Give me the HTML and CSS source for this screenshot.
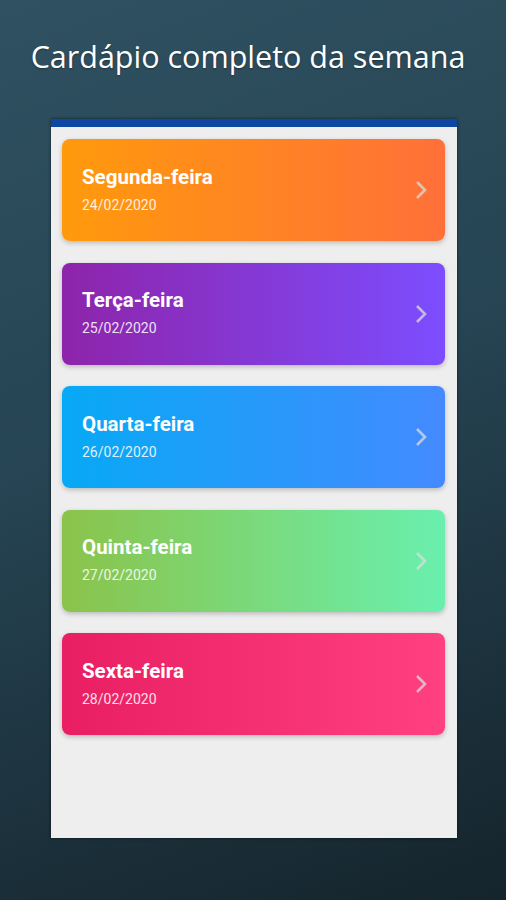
FILE: index.html
```html
<html>
<head>
    <meta name="viewport" content="width=device-width, initial-scale=1">
    <link rel="stylesheet" href="styles.css">
</head>
<body>
<h1 class="headline">Cardápio completo da semana</h1>
<div class="screen">
    <div class="appbar"></div>
    <div class="days">
        <div class="day orange">
            <div class="day-text">
                <div class="day-name">Segunda-feira</div>
                <div class="day-date">24/02/2020</div>
            </div>
            <svg class="chevron" viewBox="0 0 14 22" width="14" height="22"><path d="M3 3 L11 11 L3 19" /></svg>
        </div>
        <div class="day purple">
            <div class="day-text">
                <div class="day-name">Terça-feira</div>
                <div class="day-date">25/02/2020</div>
            </div>
            <svg class="chevron" viewBox="0 0 14 22" width="14" height="22"><path d="M3 3 L11 11 L3 19" /></svg>
        </div>
        <div class="day blue">
            <div class="day-text">
                <div class="day-name">Quarta-feira</div>
                <div class="day-date">26/02/2020</div>
            </div>
            <svg class="chevron" viewBox="0 0 14 22" width="14" height="22"><path d="M3 3 L11 11 L3 19" /></svg>
        </div>
        <div class="day green">
            <div class="day-text">
                <div class="day-name">Quinta-feira</div>
                <div class="day-date">27/02/2020</div>
            </div>
            <svg class="chevron" viewBox="0 0 14 22" width="14" height="22"><path d="M3 3 L11 11 L3 19" /></svg>
        </div>
        <div class="day pink">
            <div class="day-text">
                <div class="day-name">Sexta-feira</div>
                <div class="day-date">28/02/2020</div>
            </div>
            <svg class="chevron" viewBox="0 0 14 22" width="14" height="22"><path d="M3 3 L11 11 L3 19" /></svg>
        </div>
    </div>
</div>
</body>
</html>
```

FILE: styles.css
```css
body {margin:0; height:900px; overflow:hidden; background:linear-gradient(160deg, #2f5161 0%, #264453 45%, #15242c 100%); font-family:Roboto, "Noto Sans", sans-serif;}
.headline {margin:0; padding:36px 10px 0 0; height:83px; box-sizing:border-box; text-align:center; color:#fff; font-family:"Open Sans", "Noto Sans", sans-serif; font-weight:400; font-size:30.5px; line-height:40px; text-shadow:0 1px 2px rgba(0,0,0,0.35);}
.screen {margin:36px 0 0 51px; width:406px; height:719px; background:#eeeeee; box-shadow:0 0 3px rgba(0,0,0,0.6); display:flex; flex-direction:column;}
.appbar {height:8px; background:#0d47a1;}
.days {display:flex; flex-direction:column; gap:21.5px; padding:12px 12px 0 11px;}
.day {height:102px; border-radius:8px; display:flex; align-items:center; justify-content:space-between; padding:0 17px 0 20px; box-shadow:0 2px 5px rgba(0,0,0,0.22); color:#fff;}
.day-name {font-size:20.5px; font-weight:700; line-height:24px; margin-top:-2px;}
.day-date {font-size:14px; line-height:18px; margin-top:7px; opacity:0.85;}
.chevron {fill:none; stroke:rgba(220,220,220,0.75); stroke-width:2.6;}
.orange {background:linear-gradient(90deg, #ff9a0c, #ff7039);}
.purple {background:linear-gradient(90deg, #8e24aa, #7c4dff);}
.blue {background:linear-gradient(90deg, #07a9f5, #448aff);}
.green {background:linear-gradient(90deg, #8bc34a, #69f0ae);}
.pink {background:linear-gradient(90deg, #e91e63, #ff4081);}
```
